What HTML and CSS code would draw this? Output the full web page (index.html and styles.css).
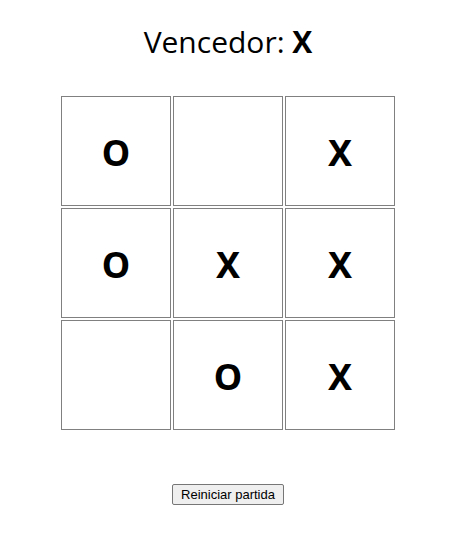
FILE: index.html
```html
<!DOCTYPE html>
<html lang="es">
<head>
<meta charset="utf-8">
<title>Tres en raya</title>
<link rel="stylesheet" href="styles.css">
</head>
<body>
<main class="game">
<h1 class="status">Vencedor: <strong>X</strong></h1>
<table class="board">
<tr><td>O</td><td></td><td>X</td></tr>
<tr><td>O</td><td>X</td><td>X</td></tr>
<tr><td></td><td>O</td><td>X</td></tr>
</table>
<button class="restart" type="button">Reiniciar partida</button>
</main>
</body>
</html>
```
FILE: styles.css
```css
body {
  margin: 0;
  background: #fff;
  color: #000;
  font-family: "Segoe UI", "Noto Sans", "Open Sans", sans-serif;
}

.game {
  display: flex;
  flex-direction: column;
  align-items: center;
  padding: 20px 0 24px 7px;
}

.status {
  margin: 0 0 30px;
  font-family: "Segoe UI", "Open Sans", sans-serif;
  font-size: 30px;
  font-weight: 400;
  line-height: 44px;
}

.status strong {
  font-weight: 700;
}

.board {
  border-spacing: 2px;
}

.board td {
  box-sizing: border-box;
  width: 110px;
  height: 110px;
  padding: 4px 0 0;
  border: 1px solid #808080;
  font-size: 36px;
  font-weight: 700;
  line-height: 48px;
  text-align: center;
}

.restart {
  margin-top: 52px;
  padding: 0 8px;
  border: 1px solid #767676;
  border-radius: 2px;
  background: #efefef;
  color: #000;
  font: 13px/19px "Liberation Sans", Arial, sans-serif;
}
```
